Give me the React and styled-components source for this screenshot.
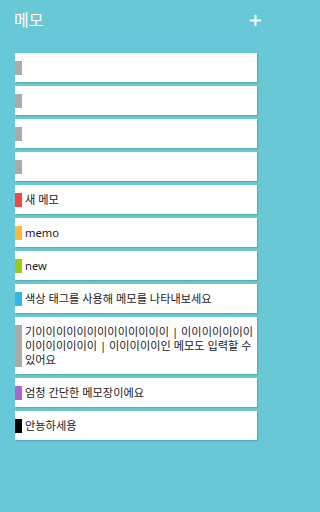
import React from "react";
import styled, { createGlobalStyle } from "styled-components";

const Global = createGlobalStyle`
  html, body { margin: 0; padding: 0; background: #68c8d5; }
  body { font-family: "Noto Sans", "Noto Sans CJK KR", sans-serif; }
`;

const Page = styled.div`
  width: 272px;
  min-height: 512px;
  background: #68c8d5;
  display: flex;
  flex-direction: column;
`;

const Header = styled.header`
  height: 40px;
  display: flex;
  align-items: center;
  justify-content: space-between;
  padding: 0 11px 0 14px;
`;

const Title = styled.h1`
  margin: 0;
  font-size: 16px;
  line-height: 20px;
  font-weight: 400;
  color: #fff;
`;

const AddButton = styled.button`
  border: 0;
  padding: 0;
  background: none;
  width: 11px;
  height: 11px;
  display: flex;
  cursor: pointer;
`;

const List = styled.ul`
  list-style: none;
  margin: 0;
  padding: 13px 15px 0;
  display: flex;
  flex-direction: column;
  gap: 4px;
`;

const Card = styled.li`
  background: #fff;
  padding: 7px 0;
  box-shadow: 1px 1px 1px rgba(0, 0, 0, 0.14);
`;

const Body = styled.div`
  display: flex;
  align-items: stretch;
  padding: 0.5px 0;
`;

const Tag = styled.span`
  flex: 0 0 7px;
  background: ${(p) => p.$color};
  margin-right: 3px;
`;

const Text = styled.p`
  margin: 0;
  flex: 1;
  min-height: 14px;
  font-size: 11.2px;
  line-height: 14px;
  color: #1a1a1a;
`;

const memos = [
  { color: "#aaaaaa", text: "" },
  { color: "#aaaaaa", text: "" },
  { color: "#aaaaaa", text: "" },
  { color: "#aaaaaa", text: "" },
  { color: "#f44545", text: "새 메모" },
  { color: "#ffb83a", text: "memo" },
  { color: "#99cc11", text: "new" },
  { color: "#33b5e5", text: "색상 태그를 사용해 메모를 나타내보세요" },
  {
    color: "#aaaaaa",
    text: "기이이이이이이이이이이이이이 | 이이이이이이이이이이이이이이 | 이이이이이인 메모도 입력할 수 있어요",
  },
  { color: "#aa66cc", text: "엄청 간단한 메모장이에요" },
  { color: "#000000", text: "안뇽하세용" },
];

export default function App() {
  return (
    <>
      <Global />
      <Page>
        <Header>
          <Title>메모</Title>
          <AddButton aria-label="add">
            <svg width="11" height="11" viewBox="0 0 11 11">
              <rect x="4.5" y="0" width="2" height="11" fill="#fff" />
              <rect x="0" y="4.5" width="11" height="2" fill="#fff" />
            </svg>
          </AddButton>
        </Header>
        <List>
          {memos.map((m, i) => (
            <Card key={i}>
              <Body>
                <Tag $color={m.color} />
                <Text>{m.text}</Text>
              </Body>
            </Card>
          ))}
        </List>
      </Page>
    </>
  );
}
